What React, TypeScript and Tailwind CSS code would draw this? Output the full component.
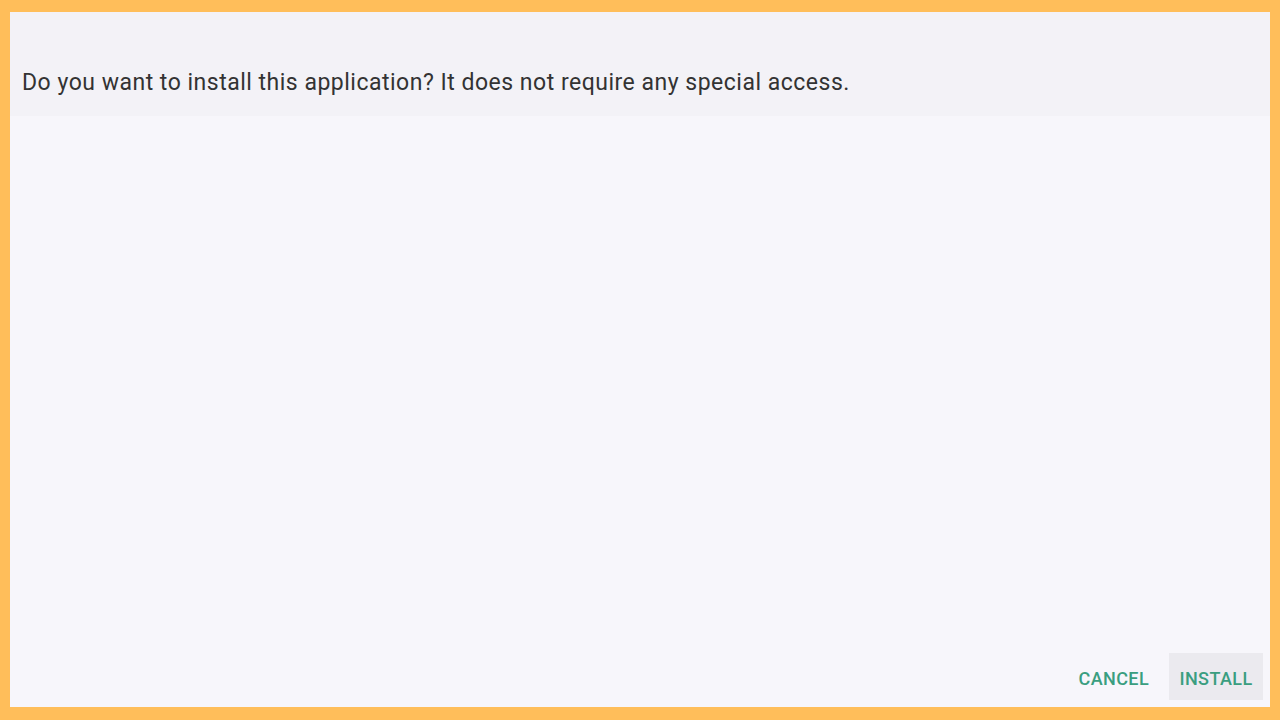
export default function App() {
  return (
    <div className="w-[1280px] h-[720px] bg-[#ffbe5a] pt-[12px] pl-[10px] pr-[10px] pb-[13px]" style={{ fontFamily: 'Roboto, "Noto Sans", sans-serif' }}>
      <div className="w-full h-full bg-[#f7f6fb] flex flex-col">
        <div className="h-[104px] bg-[#f3f2f7] flex items-center pl-[12px] pt-[36px]">
          <p className="text-[23px] tracking-[0.5px] text-[#333333] leading-none">Do you want to install this application? It does not require any special access.</p>
        </div>
        <div className="flex-1" />
        <div className="flex justify-end items-center gap-[20px] pr-[7px] pb-[7px]">
          <button className="h-[47px] pt-[3px] text-[18px] font-medium tracking-[0.4px] text-[#3a9e80]">CANCEL</button>
          <button className="h-[47px] w-[94px] pt-[3px] bg-[#ebeaef] text-[18px] font-medium tracking-[0.4px] text-[#3a9e80]">INSTALL</button>
        </div>
      </div>
    </div>
  );
}
